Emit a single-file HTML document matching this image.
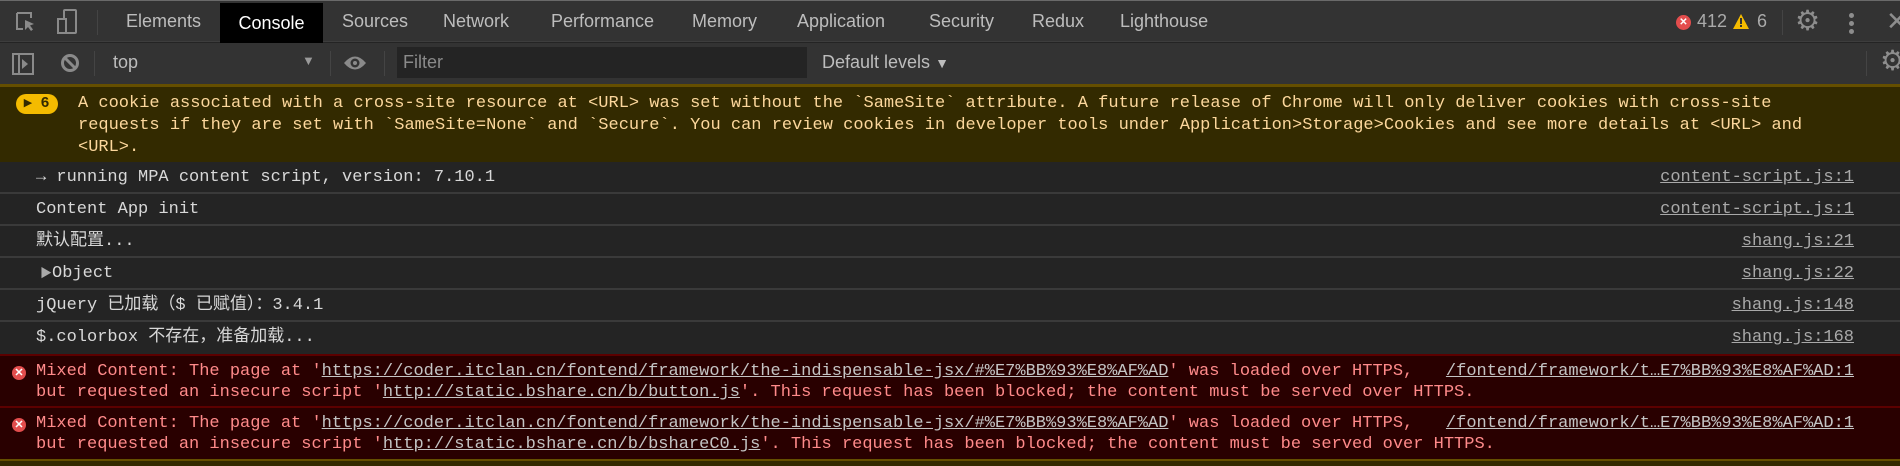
<!DOCTYPE html>
<html><head><meta charset="utf-8"><style>
*{margin:0;padding:0;box-sizing:border-box}
body{width:1900px;height:466px;overflow:hidden;background:#242424;font-family:"Liberation Sans","Noto Sans CJK SC",sans-serif;position:relative}
.abs{position:absolute}
#tabs{left:0;top:0;width:1900px;height:42px;background:#333;border-top:1px solid #6a6a6a;border-bottom:1px solid #3d3d3d}
.tab{position:absolute;top:10px;font-size:18px;color:#bdbdbd;white-space:nowrap}
#ctab{left:220px;top:2px;width:103px;height:40px;background:#000;color:#fff;font-size:18px;text-align:center;line-height:40px}
#tb2{left:0;top:43px;width:1900px;height:41px;background:#333}
.sep{position:absolute;width:1px;background:#444}
.mono{font-family:"Liberation Mono","Noto Sans CJK SC",monospace;font-size:17px}
#warn{left:0;top:84px;width:1900px;height:78px;background:#332a00;border-top:3px solid #654f00;color:#fcd79c}
.row{position:absolute;left:0;width:1900px;border-bottom:2px solid #3a3a3a;color:#d8d8d8}
.row .t{position:absolute;left:36px;top:5px;line-height:22px;height:22px;white-space:pre}
.row .l{position:absolute;right:46px;top:5px;line-height:22px;color:#a9a9a9;text-decoration:underline;white-space:pre}
.err{position:absolute;left:0;width:1900px;background:#290000;border-top:2px solid #5c0000;color:#ff8a8a}
.err .t{position:absolute;left:36px;top:5px;line-height:21px;white-space:pre}
.err u{color:#c4c4c4}
.err .l{position:absolute;right:46px;top:5px;line-height:21px;color:#c4c4c4;text-decoration:underline;white-space:pre}
.ei{position:absolute;left:12px;top:10px;width:14px;height:14px;border-radius:50%;background:#e34d4d;color:#fff;font:bold 11px/14px "Liberation Sans";text-align:center}
</style></head><body>
<div id="tabs" class="abs">
 <svg class="abs" style="left:14px;top:9px" width="24" height="24" viewBox="0 0 24 24"><path d="M3 3h14v5M3 3v16h6" fill="none" stroke="#8a8a8a" stroke-width="2"/><path d="M11 10l9 4-4 1.5 3 4-2 1.5-3-4-3 3z" fill="#8a8a8a"/></svg>
 <svg class="abs" style="left:56px;top:8px" width="22" height="26" viewBox="0 0 22 26"><rect x="8" y="1" width="12" height="23" rx="1" fill="none" stroke="#8a8a8a" stroke-width="2"/><rect x="2" y="10" width="8" height="14" fill="#333" stroke="#8a8a8a" stroke-width="2"/></svg>
 <div class="sep" style="left:97px;top:9px;height:25px"></div>
 <div class="tab" style="left:126px">Elements</div>
 <div id="ctab" class="abs">Console</div>
 <div class="tab" style="left:342px">Sources</div>
 <div class="tab" style="left:443px">Network</div>
 <div class="tab" style="left:551px">Performance</div>
 <div class="tab" style="left:692px">Memory</div>
 <div class="tab" style="left:797px">Application</div>
 <div class="tab" style="left:929px">Security</div>
 <div class="tab" style="left:1032px">Redux</div>
 <div class="tab" style="left:1120px">Lighthouse</div>
 <div class="abs" style="left:1676px;top:14px;width:15px;height:15px;border-radius:50%;background:#e34d4d;color:#fff;font:bold 10px/15px 'Liberation Sans';text-align:center">✕</div>
 <div class="tab" style="left:1697px;color:#aaa">412</div>
 <svg class="abs" style="left:1733px;top:13px" width="16" height="15" viewBox="0 0 16 15"><path d="M8 0L16 15H0z" fill="#f4bb00"/><rect x="7" y="4" width="2" height="6" fill="#333"/><rect x="7" y="11" width="2" height="2" fill="#333"/></svg>
 <div class="tab" style="left:1757px;color:#aaa">6</div>
 <div class="sep" style="left:1782px;top:9px;height:25px"></div>
 <div class="abs" style="left:1795px;top:6px;font-size:28px;line-height:28px;color:#8d8d8d">⚙</div>
 <div class="abs" style="left:1849px;top:12px;width:5px;height:5px;border-radius:50%;background:#8d8d8d;box-shadow:0 8px 0 #8d8d8d,0 16px 0 #8d8d8d"></div>
 <div class="abs" style="left:1886px;top:5px;font-size:26px;color:#8d8d8d">✕</div>
</div>
<div id="tb2" class="abs">
 <svg class="abs" style="left:12px;top:10px" width="22" height="22" viewBox="0 0 22 22"><rect x="1" y="1" width="20" height="20" fill="none" stroke="#8a8a8a" stroke-width="2"/><rect x="6" y="2" width="2" height="18" fill="#8a8a8a"/><path d="M10 6l6 5-6 5z" fill="#8a8a8a"/></svg>
 <svg class="abs" style="left:60px;top:10px" width="20" height="20" viewBox="0 0 20 20"><circle cx="10" cy="10" r="7.5" fill="none" stroke="#8a8a8a" stroke-width="3"/><path d="M5 5l10 10" stroke="#8a8a8a" stroke-width="3"/></svg>
 <div class="sep" style="left:94px;top:8px;height:25px"></div>
 <div class="tab" style="left:113px;top:9px;color:#bdbdbd">top</div>
 <div class="abs" style="left:302px;top:10px;font-size:13px;color:#9a9a9a">▼</div>
 <div class="sep" style="left:330px;top:8px;height:25px"></div>
 <svg class="abs" style="left:343px;top:10px" width="24" height="20" viewBox="0 0 24 20"><path d="M1 10Q12-3 23 10Q12 23 1 10z" fill="#8a8a8a"/><circle cx="12" cy="10" r="4.5" fill="#333"/><circle cx="12" cy="10" r="2" fill="#8a8a8a"/></svg>
 <div class="sep" style="left:384px;top:8px;height:25px"></div>
 <div class="abs" style="left:397px;top:4px;width:410px;height:31px;background:#242424;color:#8a8a8a;font-size:18px;line-height:31px;padding-left:6px">Filter</div>
 <div class="tab" style="left:822px;top:9px;color:#bdbdbd">Default levels <span style="font-size:14px">▼</span></div>
 <div class="sep" style="left:1866px;top:8px;height:25px"></div>
 <div class="abs" style="left:1880px;top:4px;font-size:28px;line-height:28px;color:#8d8d8d">⚙</div>
</div>
<div id="warn" class="abs mono">
 <div class="abs" style="left:16px;top:7px;width:42px;height:20px;border-radius:10px;background:#f4bb00;color:#332a00;font:bold 15px/20px 'Liberation Mono';padding-left:8px">▸ 6</div>
 <div class="abs" style="left:78px;top:6px;line-height:22px;white-space:pre">A cookie associated with a cross-site resource at &lt;URL&gt; was set without the `SameSite` attribute. A future release of Chrome will only deliver cookies with cross-site
requests if they are set with `SameSite=None` and `Secure`. You can review cookies in developer tools under Application&gt;Storage&gt;Cookies and see more details at &lt;URL&gt; and
&lt;URL&gt;.</div>
</div>
<div class="row mono" style="top:162px;height:32px"><span class="t">→ running MPA content script, version: 7.10.1</span><span class="l">content-script.js:1</span></div>
<div class="row mono" style="top:194px;height:32px"><span class="t">Content App init</span><span class="l">content-script.js:1</span></div>
<div class="row mono" style="top:226px;height:32px"><span class="t">默认配置...</span><span class="l">shang.js:21</span></div>
<div class="row mono" style="top:258px;height:32px"><span class="t" style="left:40px"><span style="font-size:12px;color:#aaa">▶</span>Object</span><span class="l">shang.js:22</span></div>
<div class="row mono" style="top:290px;height:32px"><span class="t">jQuery 已加载（$ 已赋值）：3.4.1</span><span class="l">shang.js:148</span></div>
<div class="row mono" style="top:322px;height:32px;border-bottom:none"><span class="t">$.colorbox 不存在，准备加载...</span><span class="l">shang.js:168</span></div>
<div class="err mono" style="top:354px;height:52px"><div class="ei">✕</div><span class="t">Mixed Content: The page at '<u>https://coder.itclan.cn/fontend/framework/the-indispensable-jsx/#%E7%BB%93%E8%AF%AD</u>' was loaded over HTTPS,
but requested an insecure script '<u>http://static.bshare.cn/b/button.js</u>'. This request has been blocked; the content must be served over HTTPS.</span><span class="l">/fontend/framework/t…E7%BB%93%E8%AF%AD:1</span></div>
<div class="err mono" style="top:406px;height:53px"><div class="ei">✕</div><span class="t">Mixed Content: The page at '<u>https://coder.itclan.cn/fontend/framework/the-indispensable-jsx/#%E7%BB%93%E8%AF%AD</u>' was loaded over HTTPS,
but requested an insecure script '<u>http://static.bshare.cn/b/bshareC0.js</u>'. This request has been blocked; the content must be served over HTTPS.</span><span class="l">/fontend/framework/t…E7%BB%93%E8%AF%AD:1</span></div>
<div class="abs" style="left:0;top:459px;width:1900px;height:7px;background:#332a00;border-top:2px solid #654f00"></div>
</body></html>
